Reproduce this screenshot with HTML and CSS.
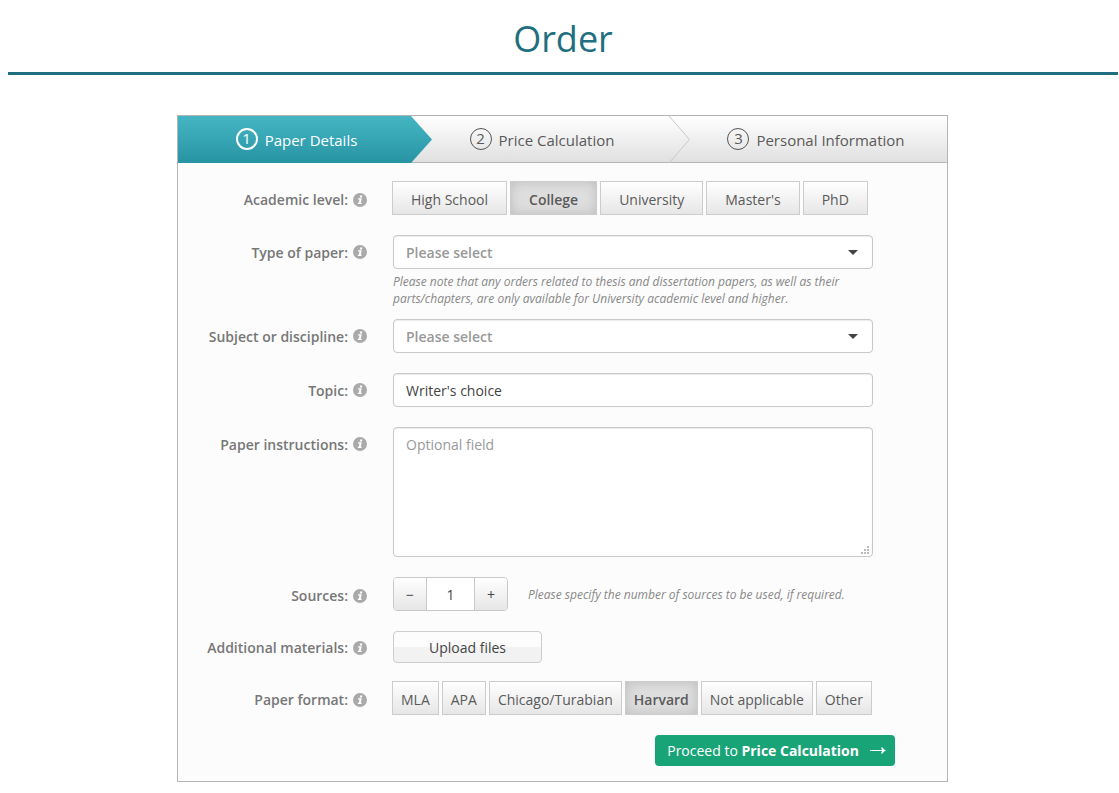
FILE: index.html
```html
<!DOCTYPE html>
<html lang="en">
<head>
    <meta charset="UTF-8">
    <title>Order</title>
    <link rel="stylesheet" href="styles.css">
</head>
<body>
    <!-- shared info icon -->
    <svg class="sprite" aria-hidden="true">
        <symbol id="info" viewBox="0 0 14 14">
            <circle cx="7" cy="7" r="7" fill="#aaa"/>
            <path d="M7.200 2.400h2.200l-.5 2H6.700zM5.200 5.200h3.600L7.800 9.800h1l-.3 1.300H4.700l.3-1.300h.8l.7-3.300H4.900z" fill="#fff"/>
        </symbol>
    </svg>

    <header class="page-header">
        <h1>Order</h1>
    </header>

    <main class="page-content">
        <form class="order-form">
            <ol class="steps">
                <li class="step active">
                    <span class="step-number">1</span>Paper Details
                    <svg class="step-arrow" viewBox="0 0 21 47" preserveAspectRatio="none">
                        <defs>
                            <linearGradient id="teal" x1="0" y1="0" x2="0" y2="1">
                                <stop offset="0" stop-color="#45b5c4"/>
                                <stop offset="1" stop-color="#2794a3"/>
                            </linearGradient>
                        </defs>
                        <path d="M0 0L21 23.500L0 47z" fill="url(#teal)"/>
                    </svg>
                </li>
                <li class="step">
                    <span class="step-number">2</span>Price Calculation
                    <svg class="step-arrow" viewBox="0 0 21 47" preserveAspectRatio="none">
                        <path d="M0 0L20.500 23.500L0 47" fill="none" stroke="#c8c8c8"/>
                    </svg>
                </li>
                <li class="step last">
                    <span class="step-number">3</span>Personal Information
                </li>
            </ol>

            <div class="form-body">
                <div class="row choice" role="radiogroup" aria-labelledby="levelLabel">
                    <div class="row-label"><span id="levelLabel">Academic level:</span><svg class="info"><use href="#info"/></svg></div>
                    <div class="options">
                        <label class="option"><input type="radio" name="level">High School</label>
                        <label class="option"><input type="radio" name="level" checked>College</label>
                        <label class="option"><input type="radio" name="level">University</label>
                        <label class="option"><input type="radio" name="level">Master's</label>
                        <label class="option"><input type="radio" name="level">PhD</label>
                    </div>
                </div>

                <div class="row with-note">
                    <div class="row-label"><label for="paperType">Type of paper:</label><svg class="info"><use href="#info"/></svg></div>
                    <div class="field">
                        <div class="select-box">
                            <select id="paperType">
                                <option>Please select</option>
                            </select>
                        </div>
                        <p class="note">Please note that any orders related to thesis and dissertation papers, as well as their parts/chapters, are only available for University academic level and higher.</p>
                    </div>
                </div>

                <div class="row">
                    <div class="row-label"><label for="subject">Subject or discipline:</label><svg class="info"><use href="#info"/></svg></div>
                    <div class="field">
                        <div class="select-box">
                            <select id="subject">
                                <option>Please select</option>
                            </select>
                        </div>
                    </div>
                </div>

                <div class="row">
                    <div class="row-label"><label for="topic">Topic:</label><svg class="info"><use href="#info"/></svg></div>
                    <div class="field">
                        <input type="text" id="topic" class="text-input" value="Writer's choice">
                    </div>
                </div>

                <div class="row">
                    <div class="row-label"><label for="instructions">Paper instructions:</label><svg class="info"><use href="#info"/></svg></div>
                    <div class="field textarea-box">
                        <textarea id="instructions" class="text-input" placeholder="Optional field"></textarea>
                        <svg class="grip" viewBox="0 0 8 8">
                            <path d="M6 0h2v2H6zM3 3h2v2H3zM6 3h2v2H6zM0 6h2v2H0zM3 6h2v2H3zM6 6h2v2H6z" fill="#bbb"/>
                        </svg>
                    </div>
                </div>

                <div class="row choice">
                    <div class="row-label"><label for="sources">Sources:</label><svg class="info"><use href="#info"/></svg></div>
                    <div class="field sources">
                        <div class="stepper">
                            <button type="button">−</button>
                            <input type="text" id="sources" value="1">
                            <button type="button">+</button>
                        </div>
                        <p class="note">Please specify the number of sources to be used, if required.</p>
                    </div>
                </div>

                <div class="row upload">
                    <div class="row-label"><span>Additional materials:</span><svg class="info"><use href="#info"/></svg></div>
                    <div class="field">
                        <button type="button" class="upload-button">Upload files</button>
                    </div>
                </div>

                <div class="row choice" role="radiogroup" aria-labelledby="formatLabel">
                    <div class="row-label"><span id="formatLabel">Paper format:</span><svg class="info"><use href="#info"/></svg></div>
                    <div class="options compact">
                        <label class="option"><input type="radio" name="format">MLA</label>
                        <label class="option"><input type="radio" name="format">APA</label>
                        <label class="option"><input type="radio" name="format">Chicago/Turabian</label>
                        <label class="option"><input type="radio" name="format" checked>Harvard</label>
                        <label class="option"><input type="radio" name="format">Not applicable</label>
                        <label class="option"><input type="radio" name="format">Other</label>
                    </div>
                </div>

                <div class="actions">
                    <button type="submit" class="proceed-button">
                        <span>Proceed to <b>Price Calculation</b></span>
                        <svg class="arrow" viewBox="0 0 16 8">
                            <path d="M0 3h12L11 .5h1.500Q13.500 2.500 16 3.500Q13.500 4.500 12.500 6.500H11L12 4H0z" fill="#fff"/>
                        </svg>
                    </button>
                </div>
            </div>
        </form>
    </main>
</body>
</html>
```
FILE: styles.css
```css
* {
    box-sizing: border-box;
}

body {
    font-family: "Open Sans", sans-serif;
    font-size: 14px;
    line-height: 20px;
    margin: 0;
    color: #5a5a5a;
    background-color: #fff;
}

button, input, select, textarea {
    font-family: inherit;
    font-size: 14px;
    color: #444;
}

.sprite {
    display: none;
}

.page-header {
    margin: 0 1px 40px 8px;
    padding: 14px 0 8px;
    border-bottom: 3px solid #1f6f80;
    text-align: center;
}

.page-header h1 {
    margin: 0;
    font-size: 36px;
    line-height: 50px;
    font-weight: normal;
    color: #1f6f80;
}

.page-content {
    padding: 0 2px 11px 8px;
}

.order-form {
    max-width: 771px;
    margin: 0 auto;
    border: 1px solid #b5b5b5;
    background-color: #fcfcfc;
}

/* Steps */
.steps {
    display: grid;
    grid-template-columns: 233fr 258fr 278fr;
    height: 47px;
    margin: 0;
    padding: 0;
    list-style: none;
    border-bottom: 1px solid #b5b5b5;
    background: linear-gradient(#fff, #e0e0e0);
}

.step {
    position: relative;
    display: flex;
    align-items: center;
    justify-content: center;
    gap: 7px;
    padding: 1px 0 0 4px;
    font-size: 15px;
}

.step.active {
    height: 47px;
    color: #fff;
    background: linear-gradient(#45b5c4, #2794a3);
}

.step.last {
    padding-left: 16px;
}

.step-number {
    width: 22px;
    height: 22px;
    margin-bottom: 3px;
    border: 1px solid #555;
    border-radius: 50%;
    line-height: 19px;
    text-align: center;
}

.step.active .step-number {
    border: 2px solid #fff;
    line-height: 17px;
}

.step-arrow {
    position: absolute;
    z-index: 1;
    top: 0;
    left: 100%;
    width: 21px;
    height: 100%;
}

/* Form rows */
.form-body {
    padding: 18px 52px 15px 0;
}

.row {
    display: grid;
    grid-template-columns: 189px 1fr;
    column-gap: 25px;
    margin-bottom: 20px;
}

.row.with-note {
    margin-bottom: 12px;
}

.row.upload {
    margin-bottom: 18px;
}

.row-label {
    display: flex;
    align-items: center;
    justify-content: flex-end;
    gap: 5px;
    height: 34px;
    padding-top: 1px;
    font-weight: 600;
    color: #777;
}

.row.choice .row-label {
    padding-top: 4px;
}

.row.upload .row-label {
    height: 32px;
    padding-top: 2px;
}

.info {
    width: 14px;
    height: 14px;
    margin-bottom: 1px;
}

.field {
    max-width: 481px;
    padding-left: 1px;
}

.note {
    margin: 4px 0 0;
    font-size: 12px;
    line-height: 17px;
    font-style: italic;
    color: #888;
}

.text-input, select {
    display: block;
    width: 100%;
    height: 34px;
    padding: 0 12px;
    border: 1px solid #c8c8c8;
    border-radius: 4px;
    background-color: #fff;
    box-shadow: inset 0 1px 1px rgba(0, 0, 0, 0.08);
}

.select-box {
    position: relative;
}

.select-box::after {
    content: "";
    position: absolute;
    top: 15px;
    right: 15px;
    border: 5px solid transparent;
    border-top-color: #444;
    border-bottom: 0;
    pointer-events: none;
}

select {
    appearance: none;
    font-weight: 600;
    color: #999;
}

.textarea-box {
    position: relative;
}

textarea.text-input {
    height: 130px;
    padding: 7px 12px;
    line-height: 20px;
    resize: none;
}

textarea::placeholder {
    color: #999;
}

.grip {
    position: absolute;
    right: 4px;
    bottom: 3px;
    width: 8px;
    height: 8px;
    pointer-events: none;
}

/* Radio options */
.options {
    display: flex;
    gap: 3px;
}

.option {
    height: 34px;
    padding: 0 18px;
    border: 1px solid #ccc;
    line-height: 36px;
    white-space: nowrap;
    background: linear-gradient(#fff, #e6e6e6);
    cursor: pointer;
}

.compact .option {
    padding: 0 8px;
}

.option input {
    position: absolute;
    opacity: 0;
    margin: 0;
    pointer-events: none;
}

.option:has(input:checked) {
    font-weight: 600;
    background: #dedede;
    box-shadow: inset 0 0 12px rgba(0, 0, 0, 0.15);
}

/* Sources */
.sources {
    display: flex;
    align-items: center;
    gap: 20px;
    max-width: none;
}

.sources .note {
    margin: 0;
}

.stepper {
    display: flex;
    width: 115px;
    height: 34px;
    border: 1px solid #c8c8c8;
    border-radius: 4px;
    overflow: hidden;
}

.stepper button {
    width: 32px;
    padding: 0;
    border: 0;
    background: linear-gradient(#fff, #e6e6e6);
}

.stepper input {
    flex: 1;
    min-width: 0;
    padding: 0;
    border: solid #c8c8c8;
    border-width: 0 1px;
    text-align: center;
}

/* Buttons */
.upload-button {
    display: block;
    width: 149px;
    height: 32px;
    border: 1px solid #ccc;
    border-radius: 4px;
    background: linear-gradient(#fcfcfc 50%, #f2f2f2 50%);
}

.actions {
    display: flex;
    justify-content: flex-end;
}

.proceed-button {
    display: flex;
    align-items: center;
    gap: 11px;
    height: 31px;
    padding: 0 9px 0 12px;
    border: 0;
    border-radius: 4px;
    color: #fff;
    background-color: #19a477;
}

.arrow {
    width: 16px;
    height: 8px;
}
```
